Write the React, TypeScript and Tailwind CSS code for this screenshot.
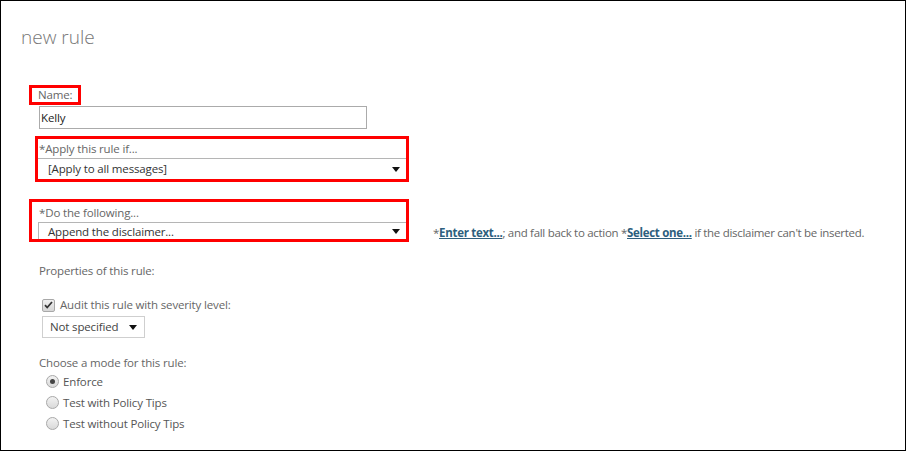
import { useState } from 'react';

const font = "font-['Segoe_UI','Open_Sans',Arial,sans-serif]";

function Caret() {
  return (
    <svg width="8" height="5" viewBox="0 0 8 5" className="shrink-0" aria-hidden="true">
      <path d="M0 0h8L4 5z" fill="#111" />
    </svg>
  );
}

function Radio({ checked, label }: { checked?: boolean; label: string }) {
  return (
    <label className="flex h-[21px] items-center gap-[4px]">
      <span className="flex h-[13px] w-[13px] items-center justify-center rounded-full border border-[#a8a8a8] bg-gradient-to-b from-[#f2f2f2] to-[#d9d9d9]">
        {checked && <span className="h-[5px] w-[5px] rounded-full bg-[#444]" />}
      </span>
      <span className="text-[#555]">{label}</span>
    </label>
  );
}

export default function App() {
  const [name, setName] = useState('Kelly');

  return (
    <div className={`h-[451px] w-[906px] border border-black bg-white text-[11.5px] leading-[16px] tracking-[-0.15px] text-[#666] ${font}`}>
      <h1 className="ml-[20px] mt-[24px] text-[19px] font-light leading-[24px] tracking-normal text-[#777]">new rule</h1>

      <div className="ml-[28px] mt-[36px] flex w-[380px] flex-col">
        <div className="w-fit border-[3px] border-[#ff0000] px-[6px] py-0 leading-[14px]">Name:</div>
        <input
          value={name}
          onChange={(e) => setName(e.target.value)}
          className="ml-[10px] mt-px h-[23px] w-[328px] border border-[#ababab] px-[1px] text-[11.5px] text-[#222] outline-none"
        />
      </div>

      <div className="ml-[34px] mt-[7px] w-[374px] border-[3px] border-[#ff0000]">
        <div className="h-[19px] pl-[1px] pt-[2px]">*Apply this rule if...</div>
        <div className="flex h-[21px] items-center justify-between border-t border-[#b5b5b5] pl-[10px] pr-[6px] text-[#333]">
          <span>[Apply to all messages]</span>
          <Caret />
        </div>
      </div>

      <div className="mt-[17px] flex items-end">
        <div className="ml-[28px] w-[380px] shrink-0 border-[3px] border-[#ff0000]">
          <div className="h-[20px] pl-[7px] pt-[3px]">*Do the following...</div>
          <div className="ml-[6px] flex h-[17px] items-end justify-between border-l border-t border-[#b5b5b5] pb-0 pl-[9px] pr-[6px] text-[#333]">
            <span className="leading-[15px]">Append the disclaimer...</span>
            <span className="pb-[5px]">
              <Caret />
            </span>
          </div>
        </div>
        <p className="mb-[1px] ml-[24px] whitespace-nowrap tracking-[-0.3px]">
          *<a className="font-bold text-[#2e5f7e] underline">Enter text...</a>; and fall back to action *
          <a className="font-bold text-[#2e5f7e] underline">Select one...</a> if the disclaimer can't be inserted.
        </p>
      </div>

      <div className="ml-[38px] mt-[21px] flex flex-col">
        <div>Properties of this rule:</div>
        <label className="ml-[3px] mt-[18px] flex items-center gap-[5px]">
          <span className="flex h-[13px] w-[13px] items-center justify-center rounded-[2px] border border-[#a8a8a8] bg-gradient-to-b from-[#f0f0f0] to-[#d6d6d6]">
            <svg width="9" height="8" viewBox="0 0 9 8" aria-hidden="true">
              <path d="M1 4.2l2.2 2.3L8 1" fill="none" stroke="#333" strokeWidth="1.8" />
            </svg>
          </span>
          <span>Audit this rule with severity level:</span>
        </label>
        <div className="ml-[3px] mt-[3px] flex h-[22px] w-[103px] items-center justify-between border border-[#cfcfcf] pl-[7px] pr-[7px] text-[#444]">
          <span>Not specified</span>
          <Caret />
        </div>

        <div className="mt-[17px]">Choose a mode for this rule:</div>
        <div className="ml-[7px] flex flex-col">
          <Radio checked label="Enforce" />
          <Radio label="Test with Policy Tips" />
          <Radio label="Test without Policy Tips" />
        </div>
      </div>
    </div>
  );
}
